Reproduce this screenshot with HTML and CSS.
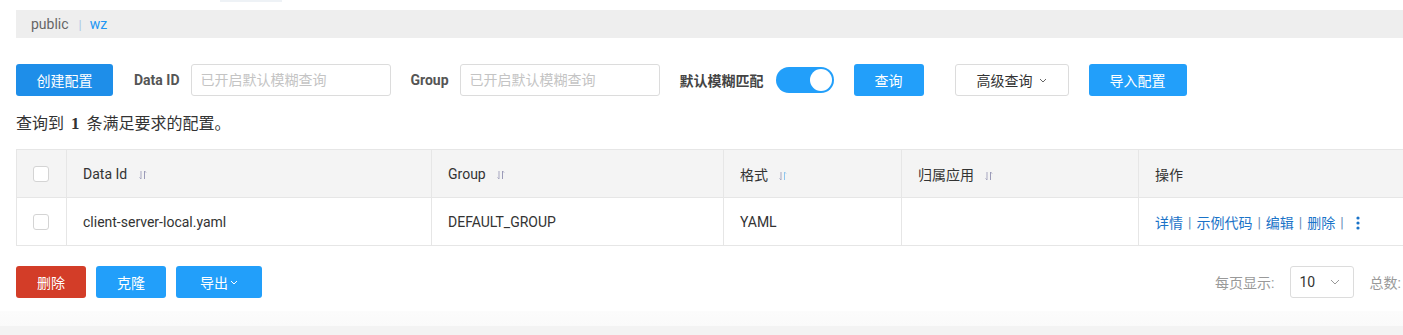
FILE: index.html
```html
<!DOCTYPE html>
<html lang="zh">
<head>
<meta charset="utf-8">
<link rel="stylesheet" href="styles.css">
</head>
<body>
<div class="page">
  <div class="tabstub"></div>
  <div class="crumb">
    <span class="ns">public</span>
    <span class="sep">|</span>
    <span class="cur">wz</span>
  </div>

  <div class="toolbar">
    <button class="btn btn-create">创建配置</button>
    <label class="lbl">Data ID</label>
    <input class="inp" placeholder="已开启默认模糊查询">
    <label class="lbl lbl-group">Group</label>
    <input class="inp" placeholder="已开启默认模糊查询">
    <span class="lbl lbl-fuzzy">默认模糊匹配</span>
    <span class="switch"><span class="knob"></span></span>
    <button class="btn btn-primary btn-query">查询</button>
    <button class="btn btn-normal btn-adv">高级查询 <svg class="chev" width="8" height="5" viewBox="0 0 8 5"><path d="M1 1l3 3 3-3" fill="none" stroke="#666" stroke-width="1"/></svg></button>
    <button class="btn btn-primary btn-import">导入配置</button>
  </div>

  <div class="summary">查询到 <b>1</b> 条满足要求的配置。</div>

  <table class="grid">
    <colgroup>
      <col class="c0"><col class="c1"><col class="c2"><col class="c3"><col class="c4"><col class="c5">
    </colgroup>
    <thead>
      <tr>
        <th class="chk"><span class="box"></span></th>
        <th>Data Id <svg class="sort" width="8" height="10" viewBox="0 0 8 10"><path d="M2 1v8M0.5 7.5L2 9" stroke="#a7a7c0" stroke-width="1" fill="none"/><path d="M5.5 9V1M5.5 1L7 2.5" stroke="#9b9bb8" stroke-width="1" fill="none"/></svg></th>
        <th>Group <svg class="sort" width="8" height="10" viewBox="0 0 8 10"><path d="M2 1v8M0.5 7.5L2 9" stroke="#a7a7c0" stroke-width="1" fill="none"/><path d="M5.5 9V1M5.5 1L7 2.5" stroke="#9b9bb8" stroke-width="1" fill="none"/></svg></th>
        <th>格式 <svg class="sort" width="8" height="10" viewBox="0 0 8 10"><path d="M2 1v8M0.5 7.5L2 9" stroke="#a7a7c0" stroke-width="1" fill="none"/><path d="M5.5 9V1M5.5 1L7 2.5" stroke="#8fc6ee" stroke-width="1" fill="none"/></svg></th>
        <th>归属应用 <svg class="sort" width="8" height="10" viewBox="0 0 8 10"><path d="M2 1v8M0.5 7.5L2 9" stroke="#a7a7c0" stroke-width="1" fill="none"/><path d="M5.5 9V1M5.5 1L7 2.5" stroke="#9b9bb8" stroke-width="1" fill="none"/></svg></th>
        <th>操作</th>
      </tr>
    </thead>
    <tbody>
      <tr>
        <td class="chk"><span class="box"></span></td>
        <td>client-server-local.yaml</td>
        <td>DEFAULT_GROUP</td>
        <td>YAML</td>
        <td></td>
        <td class="ops"><a>详情</a><i>|</i><a>示例代码</a><i>|</i><a>编辑</a><i>|</i><a>删除</a><i>|</i><svg class="more" width="4" height="14" viewBox="0 0 4 14"><circle cx="2" cy="2" r="1.6" fill="#1a73c8"/><circle cx="2" cy="7" r="1.6" fill="#1a73c8"/><circle cx="2" cy="12" r="1.6" fill="#1a73c8"/></svg></td>
      </tr>
    </tbody>
  </table>

  <div class="footer">
    <div class="left">
      <button class="btn btn-danger btn-del">删除</button>
      <button class="btn btn-primary btn-clone">克隆</button>
      <button class="btn btn-primary btn-export">导出<svg class="chev" width="8" height="5" viewBox="0 0 8 5"><path d="M1 1l3 3 3-3" fill="none" stroke="#fff" stroke-width="1"/></svg></button>
    </div>
    <div class="right">
      <span class="pglbl">每页显示:</span>
      <span class="sel">10 <svg width="10" height="6" viewBox="0 0 10 6"><path d="M1 1l4 4 4-4" fill="none" stroke="#999" stroke-width="1"/></svg></span>
      <span class="pglbl total">总数:</span>
    </div>
  </div>
  <div class="bottom"></div>
</div>
</body>
</html>
```

FILE: styles.css
```css
html, body {
  margin: 0;
  padding: 0;
  background: #fff;
  overflow: hidden;
}
body {
  font-family: Roboto, "Noto Sans CJK SC", sans-serif;
  font-size: 14px;
  color: #333;
}
.page {
  width: 1560px;
}
.tabstub {
  margin-left: 220px;
  width: 62px;
  height: 2px;
  background: #eef2f6;
}
.crumb {
  margin: 8px 0 0 16px;
  height: 28px;
  background: #eeeeee;
  display: flex;
  align-items: center;
  padding-left: 15px;
  font-size: 14px;
}
.crumb .ns { color: #666; }
.crumb .sep { color: #a9c9e6; margin: 0 8px 0 10px; font-size: 13px; }
.crumb .cur { color: #2196f3; }

.toolbar {
  margin: 26px 0 0 16px;
  height: 32px;
  display: flex;
  align-items: center;
}
.btn {
  height: 32px;
  border: none;
  border-radius: 3px;
  font-family: Roboto, "Noto Sans CJK SC", sans-serif;
  font-size: 14px;
  padding: 0;
  color: #fff;
  display: inline-flex;
  align-items: center;
  justify-content: center;
}
.btn-create { width: 97px; background: #1e8ee9; }
.btn-primary { background: #229ffa; }
.btn-danger { background: #d33d28; }
.btn-normal {
  background: #fff;
  color: #333;
  border: 1px solid #dcdcdc;
}
.lbl {
  font-weight: bold;
  color: #555;
  margin-left: 21px;
  margin-right: 11px;
  font-size: 14px;
}
.lbl-group { margin-left: 20px; }
.lbl-fuzzy { margin-left: 20px; margin-right: 12px; color: #444; }
.inp {
  width: 200px;
  height: 32px;
  box-sizing: border-box;
  border: 1px solid #dcdcdc;
  border-radius: 3px;
  padding: 0 9px;
  font-family: Roboto, "Noto Sans CJK SC", sans-serif;
  font-size: 14px;
  outline: none;
}
.inp::placeholder { color: #c4c4c4; }
.switch {
  width: 58px;
  height: 26px;
  border-radius: 13px;
  background: #229ffa;
  display: inline-flex;
  align-items: center;
  justify-content: flex-end;
  box-sizing: border-box;
  padding-right: 2px;
}
.knob {
  width: 22px;
  height: 22px;
  border-radius: 50%;
  background: #fff;
}
.btn-query { width: 70px; margin-left: 20px; }
.btn-adv { width: 114px; margin-left: 31px; gap: 6px; }
.btn-adv .chev { margin-top: 1px; }
.btn-import { width: 98px; margin-left: 20px; }

.summary {
  margin: 17px 0 0 16px;
  font-size: 16px;
  height: 22px;
  line-height: 22px;
  color: #333;
}
.summary b {
  font-family: "Liberation Serif", serif;
  font-size: 17px;
  margin: 0 3px;
}

.grid {
  margin: 14px 0 0 16px;
  border-collapse: collapse;
  table-layout: fixed;
  width: 1540px;
}
.c0 { width: 50px; }
.c1 { width: 365px; }
.c2 { width: 292px; }
.c3 { width: 178px; }
.c4 { width: 237px; }
.c5 { width: 418px; }
.grid th, .grid td {
  border: 1px solid #e6e6e6;
  text-align: left;
  font-weight: normal;
  padding: 0 0 0 16px;
  height: 47px;
  font-size: 14px;
  color: #333;
  white-space: nowrap;
}
.grid thead th { background: #f4f4f4; }
.box {
  display: block;
  width: 16px;
  height: 16px;
  box-sizing: border-box;
  border: 1px solid #d4d4d4;
  border-radius: 3px;
  background: #fff;
}
.sort { margin-left: 8px; vertical-align: -1px; }
.ops { color: #1a73c8; }
.ops a { color: #1a73c8; }
.ops i { font-style: normal; color: #6a8fb8; margin: 0 5px; }
.ops .more { margin-left: 7px; vertical-align: -2px; }

.footer {
  margin: 20px 0 0 16px;
  display: flex;
  align-items: center;
  height: 32px;
}
.footer .left { display: flex; gap: 10px; }
.btn-del { width: 70px; }
.btn-clone { width: 70px; }
.btn-export { width: 86px; gap: 2px; }
.btn-export .chev { margin-top: 1px; }
.footer .right {
  margin-left: auto;
  display: flex;
  align-items: center;
  width: 345px;
}
.pglbl { color: #999; font-size: 14px; }
.sel {
  margin-left: 16px;
  width: 64px;
  height: 32px;
  box-sizing: border-box;
  border: 1px solid #dcdcdc;
  border-radius: 3px;
  display: inline-flex;
  align-items: center;
  justify-content: space-between;
  padding: 0 13px 0 8px;
  color: #333;
  font-size: 14px;
}
.total { margin-left: 15px; }
.bottom {
  margin-top: 13px;
  height: 40px;
  background: linear-gradient(#fcfcfc 0, #fafafa 15px, #f3f3f3 15px);
}
```
